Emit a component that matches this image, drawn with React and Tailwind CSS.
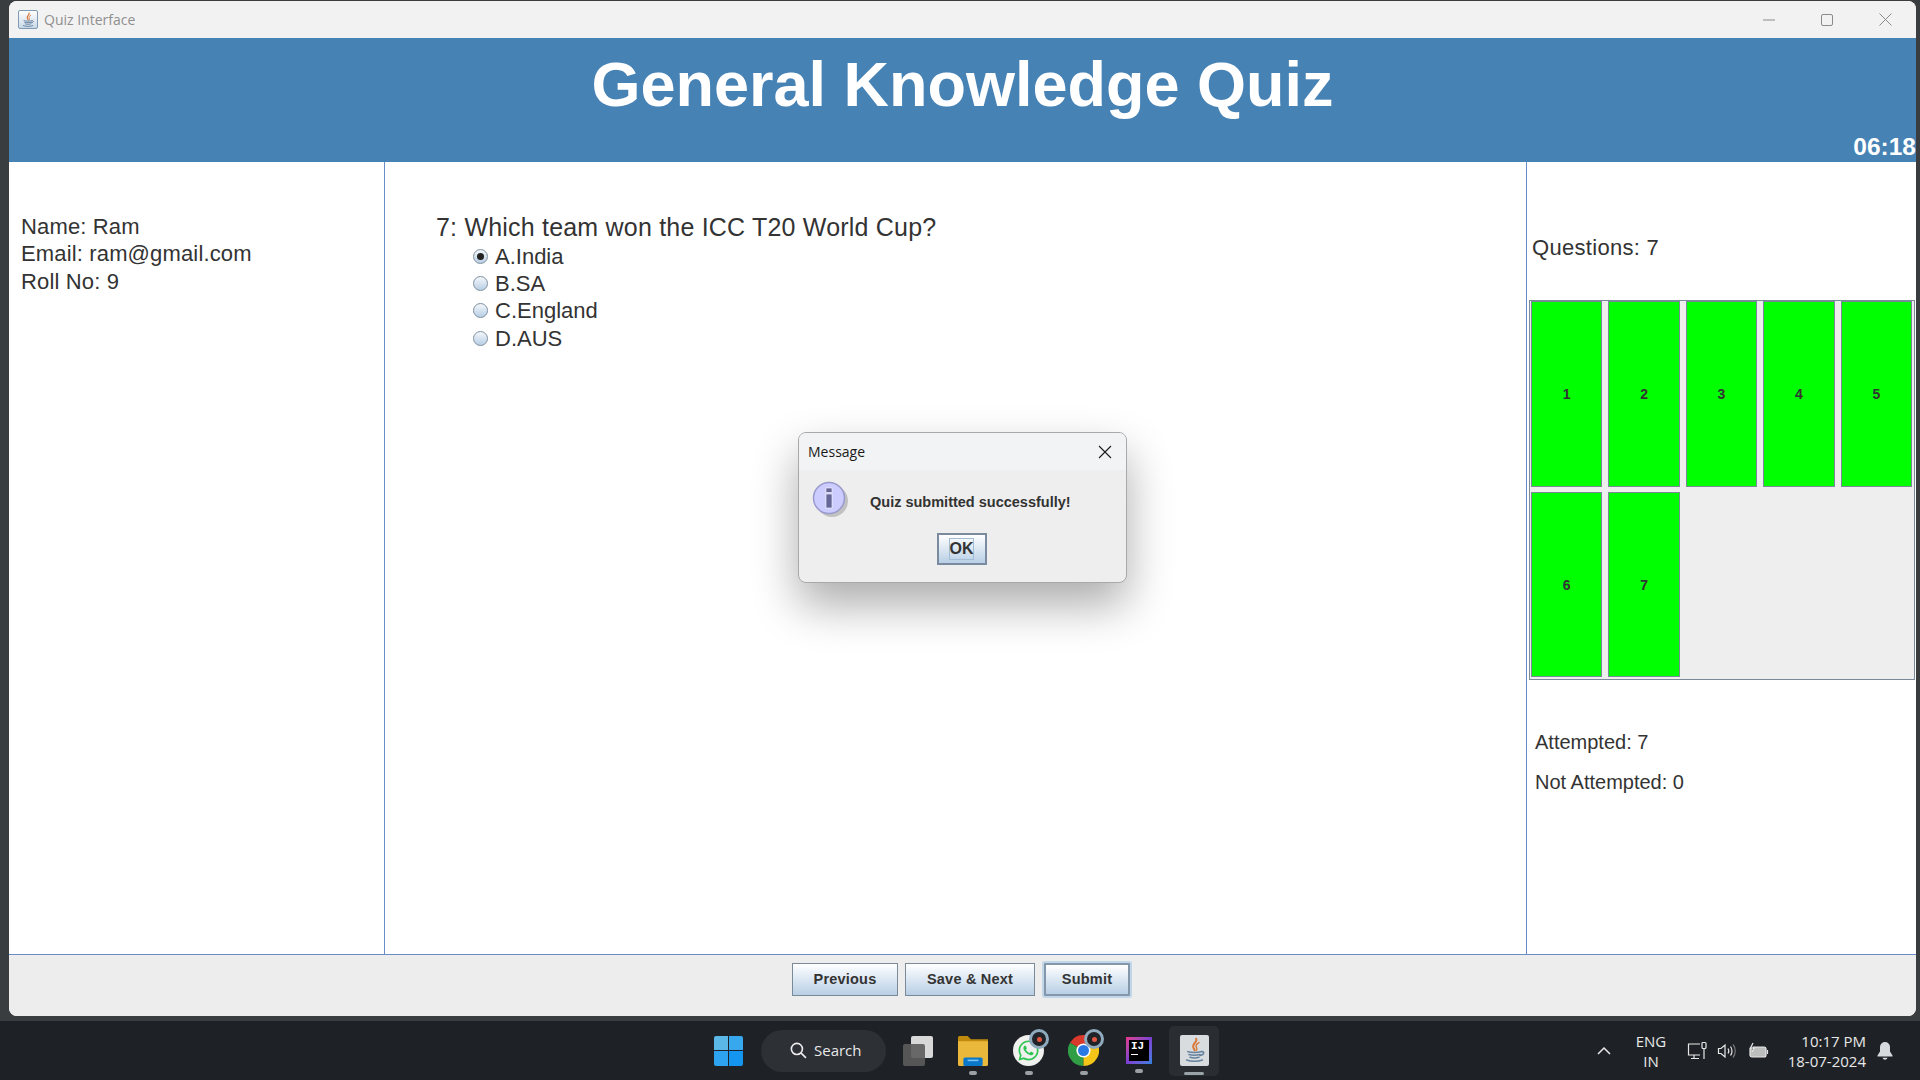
import React from 'react';
import { FaWhatsapp } from 'react-icons/fa';

const arial = "font-['Liberation_Sans',Arial,sans-serif]";
const btnFill = "bg-gradient-to-b from-white to-[#b8cfe5]";

const JavaGlyph = ({ size }) => (
  <svg width={size} height={size} viewBox="0 0 24 24" fill="none" strokeLinecap="round">
    <path d="M13.500 1.500c1.500 3-4 4.500-2.500 8 .4 1 1 1.500 1.200 2.500" stroke="#d9793a" strokeWidth="1.800" />
    <path d="M16 5c-2.500 1.200-3 2.800-2.300 4.200.4.800.6 1.500.2 2.500" stroke="#d9793a" strokeWidth="1.300" />
    <g stroke="#66829f" strokeWidth="1.400">
      <path d="M6 13c3 1 9 1 12 0" />
      <path d="M7 15.500c2.500.7 7.500.7 10 0" />
      <path d="M8 18c2 .6 6 .6 8 0" />
      <path d="M5 20.500c3.500 1.500 10.500 1.500 14 0" />
      <path d="M18 13c2.500-.8 3.500 2.500-1 3.500" />
    </g>
  </svg>
);

const Badge = () => (
  <span className="absolute right-[-5px] top-[-6px] flex h-[20px] w-[20px] items-center justify-center rounded-full border-[3px] border-[#8fa9bd] bg-[#202428]">
    <span className="h-[5px] w-[5px] rounded-full bg-[#e2553f]" />
  </span>
);

const Dot = ({ wide }) => (
  <span className={wide ? "absolute bottom-[1px] left-[15px] h-[3px] w-[20px] rounded-full bg-[#9aa3a8]" : "absolute bottom-[-9px] left-1/2 h-[4px] w-[8px] -translate-x-1/2 rounded-full bg-[#9aa0a4]"} />
);

const TaskIcon = ({ className, children }) => (
  <div className={"relative shrink-0 " + className}>{children}</div>
);

const Radio = ({ checked }) => (
  <span className="flex h-[15px] w-[15px] items-center justify-center rounded-full border border-[#7f8f9f] bg-gradient-to-b from-[#f4f7fa] to-[#b8cfe5]">
    {checked && <span className="h-[7px] w-[7px] rounded-full bg-[#222]" />}
  </span>
);

const Option = ({ label, checked }) => (
  <div className="flex h-[27.4px] items-center">
    <span className="ml-[37px] mr-[7px] flex"><Radio checked={checked} /></span>
    <span>{label}</span>
  </div>
);

const QuestionBtn = ({ n }) => (
  <div className="flex items-center justify-center border border-[#7a8a99] bg-[#00ff00] pt-[2px] text-[14px] font-bold text-[#333]">{n}</div>
);

const FootBtn = ({ w, focus, children }) => (
  <div className={(focus ? "ml-[2px] rounded-[1px] border-2 border-[#8496aa] shadow-[0_0_0_2px_#c2d6ea] " : "border border-[#7a8a99] ") + btnFill + " flex h-[33px] items-center justify-center text-[14.5px] font-bold tracking-[0.2px] text-[#333] " + w}>
    {children}
  </div>
);

const Dialog = () => (
  <div className="absolute left-[789px] top-[431px] h-[151px] w-[329px] overflow-hidden rounded-[8px] border border-[#a9a9a9] bg-[#eeeeee] shadow-[0_22px_46px_rgba(0,0,0,0.33)]">
    <div className="flex h-[37px] items-center justify-between bg-[#f2f3f4] pl-[9px] pr-[14px] font-['Open_Sans',sans-serif] text-[14px] text-[#1a1a1a]">
      <span>Message</span>
      <svg width="14" height="14" viewBox="0 0 14 14" stroke="#1a1a1a" strokeWidth="1.100"><path d="M1 1l12 12M13 1L1 13" /></svg>
    </div>
    <div className="flex items-center pl-[13px] pt-[11px]">
      <svg width="38" height="38" viewBox="0 0 38 38" className="shrink-0">
        <circle cx="18" cy="18" r="16" fill="#8a8a8a" opacity="0.45" transform="translate(2 2)" />
        <circle cx="17" cy="17" r="15.500" fill="#ccccff" stroke="#9999cc" strokeWidth="1.500" />
        <rect x="14" y="7" width="6" height="4.500" fill="#666699" stroke="#fff" strokeWidth="0.600" />
        <rect x="14" y="13" width="6" height="14" fill="#666699" stroke="#fff" strokeWidth="0.600" />
      </svg>
      <span className={"ml-[20px] mt-[6px] text-[14.5px] font-bold text-[#333] " + arial}>Quiz submitted successfully!</span>
    </div>
    <div className="mt-[14px] flex justify-center pr-[2px]">
      <div className={"flex h-[32px] w-[50px] items-center justify-center border-2 border-[#7a8a9f] " + btnFill}>
        <span className={"flex h-[22px] w-[25px] items-center justify-center border border-[#a3bdd6] text-[16px] font-bold text-[#333] " + arial}>OK</span>
      </div>
    </div>
  </div>
);

const Taskbar = () => (
  <div className="relative flex h-[59px] shrink-0 items-center bg-[#1e2227] text-[#e8e8e8] font-['Open_Sans',sans-serif]">
    <TaskIcon className="ml-[714px] grid h-[30px] w-[29px] grid-cols-2 gap-[1px]">
      <span className="rounded-tl-[2px] bg-[#5bb8e6]" />
      <span className="rounded-tr-[2px] bg-[#38a8ee]" />
      <span className="rounded-bl-[2px] bg-[#2ea3ef]" />
      <span className="rounded-br-[2px] bg-[#1496f0]" />
    </TaskIcon>
    <div className="ml-[18px] flex h-[42px] w-[125px] items-center rounded-full bg-[#2d3035] pl-[29px] text-[15px]">
      <svg width="17" height="17" viewBox="0 0 16 16" fill="none" stroke="#eee" strokeWidth="1.500" className="mr-[7px]"><circle cx="6.500" cy="6.500" r="5.200" /><path d="M10.500 10.500L15 15" /></svg>
      <span>Search</span>
    </div>
    <TaskIcon className="ml-[17px] h-[30px] w-[30px]">
      <span className="absolute left-[8px] top-0 h-[22px] w-[22px] rounded-[2px] bg-[#d8d8d8]" />
      <span className="absolute bottom-0 left-0 h-[22px] w-[22px] rounded-[2px] bg-[#5c5c5c]/90" />
    </TaskIcon>
    <TaskIcon className="ml-[25px] h-[30px] w-[30px]">
      <svg width="30" height="30" viewBox="0 0 28 28">
        <path d="M0 1.500A1.500 1.500 0 0 1 1.500 0H9l3 3h16v3H0z" fill="#c08a0c" />
        <path d="M0 5h28v21.500a1.500 1.500 0 0 1-1.500 1.500h-25A1.500 1.500 0 0 1 0 26.500z" fill="#eab83a" />
        <rect x="5" y="20" width="18" height="8" rx="1.500" fill="#0a78c8" />
        <rect x="9" y="22" width="10" height="1.500" fill="#7cc4f2" />
      </svg>
      <Dot />
    </TaskIcon>
    <TaskIcon className="ml-[25px] flex h-[31px] w-[31px] items-center justify-center rounded-full bg-[#f0f0ee]">
      <FaWhatsapp size={23} color="#2dc551" />
      <Badge />
      <Dot />
    </TaskIcon>
    <TaskIcon className="ml-[24px] h-[31px] w-[31px]">
      <svg width="31" height="31" viewBox="0 0 48 48">
        <path d="M24 24L44.800 12A24 24 0 0 0 3.200 12z" fill="#d8392b" />
        <path d="M24 24L3.200 12A24 24 0 0 0 24 48z" fill="#2f9e44" />
        <path d="M24 24L24 48A24 24 0 0 0 44.800 12z" fill="#f5c518" />
        <circle cx="24" cy="24" r="11" fill="#fff" />
        <circle cx="24" cy="24" r="8.500" fill="#2a78e4" />
      </svg>
      <Badge />
      <Dot />
    </TaskIcon>
    <TaskIcon className="ml-[27px] h-[27px] w-[26px] bg-gradient-to-br from-[#e8348a] via-[#7a3fd0] to-[#2a7fe0] p-[3px]">
      <div className="flex h-full w-full flex-col bg-black pl-[2px] pt-[1px] text-white">
        <span className="text-[11px] font-bold leading-[11px] font-['Liberation_Mono',monospace]">IJ</span>
        <span className="mt-[2px] h-[1px] w-[7px] bg-white" />
      </div>
      <span className="absolute bottom-[-9px] left-1/2 h-[4px] w-[8px] -translate-x-1/2 rounded-full bg-[#9aa0a4]" />
    </TaskIcon>
    <TaskIcon className="ml-[17px] flex h-[50px] w-[50px] items-center justify-center rounded-[5px] bg-[#2a2e33]">
      <div className="flex h-[31px] w-[29px] items-center justify-center rounded-[2px] bg-[#d9dcdf]"><JavaGlyph size={27} /></div>
      <Dot wide />
    </TaskIcon>

    <svg width="14" height="14" viewBox="0 0 14 14" fill="none" stroke="#e8e8e8" strokeWidth="1.500" className="ml-[378px]"><path d="M1 10l6-6 6 6" /></svg>
    <div className="ml-[22px] flex w-[36px] flex-col items-center text-[15px] leading-[20px]">
      <span>ENG</span>
      <span>IN</span>
    </div>
    <svg width="20" height="20" viewBox="0 0 20 20" fill="none" stroke="#e8e8e8" strokeWidth="1.200" className="ml-[18px]">
      <path d="M13 3H1.500v11H13M7 14v3M4 17.500h8" />
      <rect x="15" y="1.500" width="4" height="6" rx="1" />
      <path d="M17 7.500V18" />
    </svg>
    <svg width="20" height="20" viewBox="0 0 20 20" fill="none" stroke="#e8e8e8" strokeWidth="1.200" className="ml-[10px]">
      <path d="M1.500 7.500v5H4l4 3.500V4L4 7.500z" />
      <path d="M11 7.500c1 1.500 1 3.500 0 5M13.500 5.500c2 2.500 2 6.500 0 9" />
      <path d="M16 3.500c3 3.500 3 9.500 0 13" stroke="#777" />
    </svg>
    <svg width="21" height="20" viewBox="0 0 21 20" fill="none" stroke="#e8e8e8" strokeWidth="1.200" className="ml-[11px]">
      <rect x="2" y="6" width="16" height="10" rx="2" fill="#d8d8d8" fillOpacity="0.85" />
      <path d="M19.500 9v4" />
      <path d="M5 2L2.500 7H6L4 11" fill="#1e2227" />
    </svg>
    <div className="ml-[19px] flex w-[78px] flex-col items-end text-[15px] leading-[20px] whitespace-nowrap">
      <span>10:17 PM</span>
      <span>18-07-2024</span>
    </div>
    <svg width="16" height="20" viewBox="0 0 16 20" fill="#d6dadc" className="ml-[11px]">
      <path d="M8 1a5 5 0 0 0-5 5v4.500L.500 14.500v1h15v-1L13 10.500V6a5 5 0 0 0-5-5z" />
      <path d="M5.500 16.800a2.600 2.600 0 0 0 5 0z" />
    </svg>
  </div>
);

export default function App() {
  return (
    <div className={"flex h-screen w-full flex-col overflow-hidden bg-[#3a3d3f] pt-[1px] text-[#333] " + arial}>
      <div className="relative ml-[9px] mr-[4px] flex h-[1015px] shrink-0 flex-col overflow-hidden rounded-[8px] bg-white">
        <div className="flex h-[37px] shrink-0 items-center bg-[#f2f2f2] pl-[9px]">
          <div className="flex h-[19px] w-[20px] items-center justify-center rounded-[2px] border border-[#7f9ab5] bg-gradient-to-b from-white to-[#c9d8e6]">
            <JavaGlyph size={16} />
          </div>
          <span className="ml-[6px] font-['Open_Sans',sans-serif] text-[14px] text-[#8f8f8f]">Quiz Interface</span>
          <svg width="12" height="2" viewBox="0 0 12 2" className="ml-auto"><path d="M0 1h12" stroke="#8a8a8a" /></svg>
          <span className="ml-[46px] h-[12px] w-[12px] rounded-[2px] border border-[#8a8a8a]" />
          <svg width="13" height="13" viewBox="0 0 13 13" stroke="#8a8a8a" className="ml-[46px] mr-[24px]"><path d="M.5.500l12 12M12.500.500l-12 12" /></svg>
        </div>

        <div className="relative flex h-[124px] shrink-0 justify-center bg-[#4682b4] pt-[9px] text-white">
          <h1 className="text-[63px] font-bold leading-[74px]">General Knowledge Quiz</h1>
          <span className="absolute bottom-[1px] right-0 text-[24.5px] font-bold leading-[28px]">06:18</span>
        </div>

        <div className="flex min-h-0 flex-1">
          <div className="w-[376px] shrink-0 border-r border-[#6a8cc8] pl-[12px] pt-[50.600px] text-[22px] leading-[27.5px] tracking-[0.15px]">
            <div>Name: Ram</div>
            <div>Email: ram@gmail.com</div>
            <div>Roll No: 9</div>
          </div>

          <div className="flex-1 pl-[51px] pt-[51px] text-[22px]">
            <div className="text-[25px] leading-[29.5px] tracking-[0.2px]">7: Which team won the ICC T20 World Cup?</div>
            <Option label="A.India" checked />
            <Option label="B.SA" />
            <Option label="C.England" />
            <Option label="D.AUS" />
          </div>

          <div className="flex w-[390px] shrink-0 flex-col border-l border-[#6a8cc8] pl-[2px] pr-[1px]">
            <div className="mt-[73px] pl-[3px] text-[22px] leading-[26px] tracking-[0.3px]">Questions: 7</div>
            <div className="mt-[39px] grid h-[380px] grid-cols-5 grid-rows-2 gap-x-[6px] gap-y-[5px] border border-[#7a8a99] bg-[#eeeeee] px-[1px] pb-[2px] pr-[2px]">
              {[1, 2, 3, 4, 5, 6, 7].map((n) => <QuestionBtn key={n} n={n} />)}
            </div>
            <div className="mt-[50px] pl-[6px] text-[20px] leading-[24px]">Attempted: 7</div>
            <div className="mt-[16px] pl-[6px] text-[20px] leading-[24px]">Not Attempted: 0</div>
          </div>
        </div>

        <div className="flex h-[62px] shrink-0 justify-center gap-[7px] border-t border-[#6a8cc8] bg-[#ededed] pr-[3px] pt-[8px]">
          <FootBtn w="w-[106px]">Previous</FootBtn>
          <FootBtn w="w-[130px]">Save &amp; Next</FootBtn>
          <FootBtn w="w-[86px]" focus>Submit</FootBtn>
        </div>

        <Dialog />
      </div>
      <div className="h-[5px] shrink-0" />
      <Taskbar />
    </div>
  );
}
